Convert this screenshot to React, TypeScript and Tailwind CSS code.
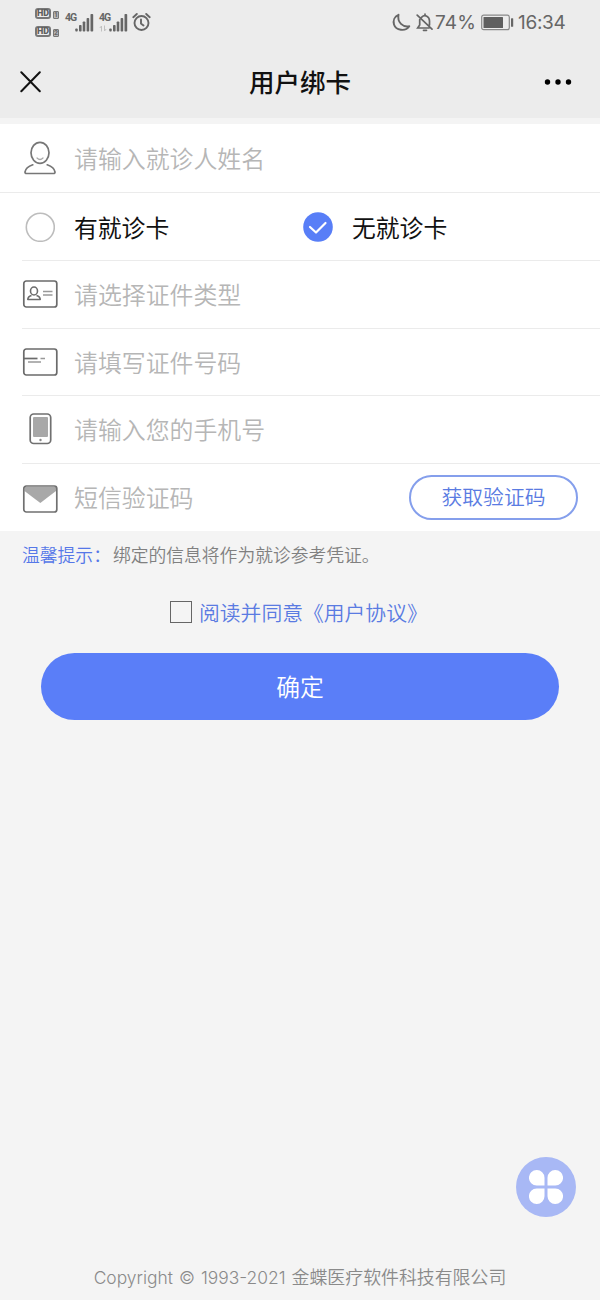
import { useState } from "react";
import type { ReactNode } from "react";

function HdBadge({ sim }: { sim: string }) {
  return (
    <div className="flex items-end gap-[2px]">
      <span className="flex h-[11px] w-4 items-center justify-center rounded-[3px] border-2 border-[#777] font-['Roboto'] text-[9px] leading-none font-black text-[#5f5f5f]">
        HD
      </span>
      <span className="flex h-2 w-[6px] items-center justify-center rounded-[1px] border border-[#777] bg-[#b5b5b5] font-['Roboto'] text-[7px] leading-none font-bold">
        {sim}
      </span>
    </div>
  );
}

function Signal({ traffic = false }: { traffic?: boolean }) {
  return (
    <div className="flex h-[18px] w-[29px]">
      <div className="w-[10px]">
        <div className="-mt-px font-['Roboto'] text-[10.5px] leading-[10px] font-bold tracking-[-1px]">4G</div>
        {traffic && (
          <svg width="8" height="7" viewBox="0 0 8 7" className="mt-[2px]" stroke="#c0c0c0" fill="none">
            <path d="M2.500 6.500V1L.8 3M5.500 .5V6l1.700-2" />
          </svg>
        )}
      </div>
      <svg width="19" height="18" viewBox="0 0 19 18" fill="#666">
        <rect x="0.300" y="14.500" width="2.400" height="3" rx=".8" />
        <rect x="4" y="11" width="2.600" height="6.500" rx=".8" />
        <rect x="7.700" y="7.500" width="2.600" height="10" rx=".8" />
        <rect x="11.600" y="4" width="2.600" height="13.500" rx=".8" />
        <rect x="15.500" y="0" width="2.700" height="17.500" rx=".8" />
      </svg>
    </div>
  );
}

function StatusBar() {
  return (
    <div className="flex h-[45px] items-start justify-between px-[35px] text-[#666]">
      <div className="flex">
        <div className="mt-2 flex flex-col gap-[7px]">
          <HdBadge sim="1" />
          <HdBadge sim="2" />
        </div>
        <div className="mt-[14px] ml-[6px] flex gap-[5px]">
          <Signal />
          <Signal traffic />
        </div>
        <svg className="mt-3 ml-1" width="19" height="20" viewBox="0 0 19 20" fill="none" stroke="#666" strokeWidth="1.900" strokeLinecap="round">
          <circle cx="9.500" cy="11" r="7" />
          <path d="M9 7.500v4l2.500 2M1.300 5.200L4.800 2M17.700 5.200L14.200 2" />
        </svg>
      </div>
      <div className="flex h-[45px] items-center">
        <svg width="19" height="19" viewBox="0 0 19 19" fill="none" stroke="#666" strokeWidth="1.900" strokeLinejoin="round">
          <path d="M6.500 1.800C2.500 3.500 .8 7.500 2 11.500c1.800 6 11.500 7.500 15.300 1.700C11 14.500 5 9.500 6.500 1.800z" />
        </svg>
        <svg className="ml-[5px]" width="18" height="19" viewBox="0 0 18 19" fill="none" stroke="#666" strokeWidth="1.700" strokeLinecap="round">
          <path d="M1.200 2.200l14.800 14M5.500 4.300C9 .8 13.500 3.500 13.500 8v4M3.700 6.500v5.500L1.700 15H13M9 2V1M7.500 17.300h3" />
        </svg>
        <span className="ml-[1px] w-[46px] font-['Inter'] text-[19px] leading-none tracking-[0.2px]">74%</span>
        <svg width="33" height="17" viewBox="0 0 33 17" fill="none">
          <rect x="0.700" y="1.200" width="27.600" height="14.500" rx="2" stroke="#888" strokeWidth="1.200" />
          <rect x="2.500" y="3" width="19.500" height="11" rx=".5" fill="#5f5f5f" />
          <rect x="30" y="4.200" width="2.200" height="8.500" rx=".5" fill="#666" />
        </svg>
        <span className="ml-[4px] w-[47px] font-['Inter'] text-[19px] leading-none tracking-[-0.3px] whitespace-nowrap">16:34</span>
      </div>
    </div>
  );
}

function PersonIcon() {
  return (
    <svg width="34" height="34" viewBox="0 0 34 34" fill="none" stroke="#777" strokeWidth="1.700" strokeLinecap="round">
      <ellipse cx="17" cy="11.800" rx="9" ry="10.500" />
      <path d="M14 17c1.800 1.800 4.200 1.800 6 0" stroke="#aaa" strokeWidth="1.200" />
      <path d="M9.800 23.800C5.500 25.300 2.500 27.800 2 31c-.1 1 .5 1.500 1.500 1.500h27c1 0 1.600-.5 1.500-1.500-.5-3.200-3.500-5.700-7.800-7.200" />
    </svg>
  );
}

function IdIcon() {
  return (
    <svg width="36" height="28" viewBox="0 0 36 28" fill="none" stroke="#6b6b6b" strokeWidth="1.700">
      <rect x="1.800" y="1" width="33" height="26" rx="2.500" />
      <ellipse cx="12" cy="11" rx="3.500" ry="4" strokeWidth="1.600" />
      <path d="M9.500 15.500c-2.700.8-3.700 2-3.700 4h12.400c0-2-1-3.200-3.700-4" strokeWidth="1.600" strokeLinejoin="round" />
      <path d="M21 11.500h9.500M21 15h9.500" stroke="#999" strokeWidth="1.300" />
    </svg>
  );
}

function CardIcon() {
  return (
    <svg className="mt-px" width="36" height="28" viewBox="0 0 36 28" fill="none" stroke="#6b6b6b" strokeWidth="1.700">
      <rect x="1.800" y="1" width="33" height="26" rx="2.500" />
      <path d="M2 10.500h13.500" />
      <path d="M18.500 10.500h4.500M6 14h13" stroke="#999" strokeWidth="1.300" />
    </svg>
  );
}

function PhoneIcon() {
  return (
    <svg width="24" height="32" viewBox="0 0 24 32" fill="none">
      <rect x="2.200" y="1" width="20.500" height="29.500" rx="3.500" stroke="#707070" strokeWidth="1.700" />
      <rect x="5" y="4" width="15" height="20" rx="1" fill="#a8a8a8" />
      <circle cx="12.500" cy="27" r="1.200" fill="#888" />
    </svg>
  );
}

function MailIcon() {
  return (
    <svg className="mt-[3px]" width="36" height="28" viewBox="0 0 36 28" fill="none">
      <path d="M2.500 2h31.500v4L18.300 18 2.500 6z" fill="#a8a8a8" />
      <rect x="1.800" y="1" width="33" height="26" rx="2.500" stroke="#707070" strokeWidth="1.700" />
    </svg>
  );
}

function FieldRow({ icon, placeholder, action }: { icon: ReactNode; placeholder: string; action?: ReactNode }) {
  return (
    <div className="ml-[22px] flex h-[67.5px] items-center border-b border-[#ebebeb] last:h-[67px] last:border-b-0">
      <div className="flex w-9 shrink-0 justify-center">{icon}</div>
      <input
        placeholder={placeholder}
        className="ml-4 min-w-0 flex-1 bg-transparent text-[23.9px] font-[350] text-gray-700 outline-none placeholder:text-[#b6b6b6]"
      />
      {action}
    </div>
  );
}

function Radio({ checked, label, onSelect }: { checked: boolean; label: string; onSelect: () => void }) {
  return (
    <button type="button" onClick={onSelect} className="flex w-[278px] items-center gap-[19px] text-[23.8px] text-[#111]">
      <svg width="30" height="30" viewBox="0 0 30 30" fill="none">
        {checked ? (
          <>
            <circle cx="15" cy="15" r="14.800" fill="#587ef7" />
            <path d="M7 15l6 5.500 9.500-9.500" stroke="#fff" strokeWidth="2.200" strokeLinecap="round" strokeLinejoin="round" />
          </>
        ) : (
          <circle cx="15.300" cy="15.300" r="14" stroke="#bdbdbd" strokeWidth="1.600" />
        )}
      </svg>
      {label}
    </button>
  );
}

export default function App() {
  const [hasCard, setHasCard] = useState(false);
  const [agreed, setAgreed] = useState(false);

  return (
    <div className="flex h-[1300px] w-[600px] flex-col bg-[#f4f4f4] font-['Noto_Sans_CJK_SC',sans-serif]">
      <header className="h-[118px] shrink-0 bg-[#ececec]">
        <StatusBar />
        <div className="grid h-[73px] grid-cols-3 items-center px-5">
          <svg width="22" height="22" viewBox="0 0 22 22" stroke="#111" strokeWidth="2" strokeLinecap="round">
            <path d="M1.300 1.300l18.500 19M19.800 1.300l-18.500 19" />
          </svg>
          <h1 className="text-center text-[25.5px] font-medium text-[#111]">用户绑卡</h1>
          <svg className="mr-[7px] justify-self-end" width="30" height="8" viewBox="0 0 30 8" fill="#000">
            <circle cx="4.500" cy="4" r="2.700" />
            <circle cx="15" cy="4" r="2.700" />
            <circle cx="25.500" cy="4" r="2.700" />
          </svg>
        </div>
      </header>

      <main className="mt-[6px] bg-white">
        <div className="flex h-[69px] flex-col border-b border-[#ebebeb]">
          <div className="h-full">
            <div className="ml-[22px] flex h-[68px] items-center">
              <div className="flex w-9 shrink-0 justify-center">
                <PersonIcon />
              </div>
              <input
                placeholder="请输入就诊人姓名"
                className="ml-4 min-w-0 flex-1 bg-transparent text-[23.9px] font-[350] text-gray-700 outline-none placeholder:text-[#b6b6b6]"
              />
            </div>
          </div>
        </div>
        <div className="ml-[22px] flex h-[68px] items-center border-b border-[#ebebeb] pl-[3px]">
          <Radio checked={hasCard} label="有就诊卡" onSelect={() => setHasCard(true)} />
          <Radio checked={!hasCard} label="无就诊卡" onSelect={() => setHasCard(false)} />
        </div>
        <FieldRow icon={<IdIcon />} placeholder="请选择证件类型" />
        <FieldRow icon={<CardIcon />} placeholder="请填写证件号码" />
        <FieldRow icon={<PhoneIcon />} placeholder="请输入您的手机号" />
        <FieldRow
          icon={<MailIcon />}
          placeholder="短信验证码"
          action={
            <button
              type="button"
              className="mr-[22px] h-[45px] w-[169px] shrink-0 rounded-full border-2 border-[#859fec] text-[20.8px] font-[350] text-[#5a7be2]"
            >
              获取验证码
            </button>
          }
        />
      </main>

      <p className="mt-[9px] pl-[22px] text-[17.8px] leading-7 font-[350] text-[#808080]">
        <span className="mr-[2px] text-[#5577e8]">温馨提示：</span>
        绑定的信息将作为就诊参考凭证。
      </p>

      <div className="mt-[29px] flex items-center pl-[170px] text-[20.8px] leading-8 font-[350] text-[#5a7be2]">
        <button
          type="button"
          aria-label="同意"
          onClick={() => setAgreed(!agreed)}
          className="mr-[7px] flex h-[22px] w-[22px] items-center justify-center border border-[#666] text-base"
        >
          {agreed && "✓"}
        </button>
        <span className="-mt-px">阅读并同意《用户协议》</span>
      </div>

      <button type="button" className="mx-[41px] mt-[25px] h-[67px] shrink-0 rounded-full bg-[#5a7ef8] text-[23.8px] font-[350] text-white">
        确定
      </button>

      <div className="mt-auto mr-6 flex h-[60px] w-[60px] shrink-0 items-center justify-center self-end rounded-full bg-[#a8b8f5]">
        <svg width="34" height="34" viewBox="0 0 34 34" fill="#fff">
          <path d="M7.700 0a7.700 7.700 0 0 1 7.800 7.700v7.800H7.700A7.700 7.700 0 0 1 7.700 0zM26.300 0a7.700 7.700 0 0 0-7.800 7.700v7.800h7.800a7.700 7.700 0 0 0 0-15.500zM7.700 34a7.700 7.700 0 0 0 7.800-7.700v-7.800H7.700a7.700 7.700 0 0 0 0 15.500zM26.300 34a7.700 7.700 0 0 1-7.800-7.700v-7.800h7.800a7.700 7.700 0 0 1 0 15.500z" />
        </svg>
      </div>

      <footer className="mt-[47px] mb-2 text-center font-['Inter','Noto_Sans_CJK_SC',sans-serif] text-[17.9px] leading-7 font-[350] text-[#8a8a8a]">
        <span className="text-[17.4px] [word-spacing:1.2px]">Copyright © 1993-2021 </span>
        金蝶医疗软件科技有限公司
      </footer>
    </div>
  );
}
